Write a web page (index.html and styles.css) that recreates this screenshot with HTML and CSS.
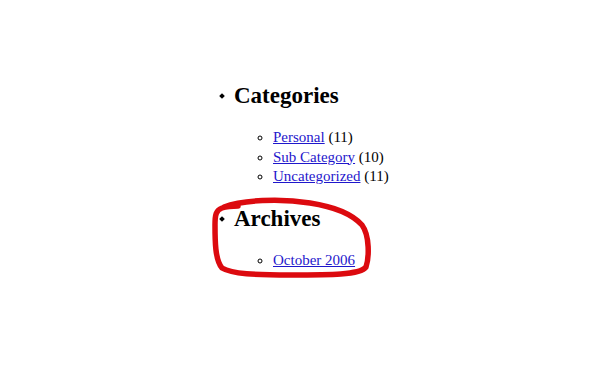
FILE: index.html
```html
<!DOCTYPE html>
<html>
<head>
<meta charset="utf-8">
<link rel="stylesheet" href="styles.css">
</head>
<body>
<div class="page">
  <ul class="sidebar">
    <li class="widget">
      <h2 class="widget-title">Categories</h2>
      <ul class="items">
        <li><a href="#">Personal</a> (11)</li>
        <li><a href="#">Sub Category</a> (10)</li>
        <li><a href="#">Uncategorized</a> (11)</li>
      </ul>
    </li>
    <li class="widget">
      <h2 class="widget-title">Archives</h2>
      <ul class="items">
        <li><a href="#">October 2006</a></li>
      </ul>
    </li>
  </ul>
  <svg class="scribble" width="605" height="375" viewBox="0 0 605 375" xmlns="http://www.w3.org/2000/svg">
    <path d="M 224 207 C 242 200, 280 198, 310 203 C 336 207, 352 214, 362 225 C 370 236, 369 258, 366 267 C 360 275, 330 275, 290 275 C 255 275, 232 274, 222 268 C 215 260, 215 240, 215 225 C 215 215, 216 210, 222 208 C 228 206, 234 206, 238 206"
      fill="none" stroke="#dc0a0f" stroke-width="5.5" stroke-linecap="round" stroke-linejoin="round"/>
  </svg>
</div>
</body>
</html>
```

FILE: styles.css
```css
html, body {
  margin: 0;
  padding: 0;
  background: #ffffff;
}

body {
  font-family: "Liberation Serif", "Times New Roman", serif;
  font-size: 15px;
  color: #000000;
}

.page {
  position: relative;
  width: 605px;
  height: 375px;
  overflow: hidden;
  padding-top: 83px;
  box-sizing: border-box;
}

.sidebar {
  margin: 0 0 0 194px;
  padding: 0 0 0 40px;
  list-style: none;
}

.widget-title {
  font-size: 23px;
  font-weight: bold;
  line-height: 26px;
  margin: 0 0 19px 0;
}

.widget-title::before {
  content: "";
  display: inline-block;
  width: 4px;
  height: 4px;
  background: #000000;
  transform: rotate(45deg);
  margin-left: -14px;
  margin-right: 10px;
  vertical-align: 5px;
}

.items {
  margin: 0 0 19.5px 0;
  padding: 0 0 0 39px;
  list-style: circle;
}

.items li {
  line-height: 19.5px;
}

.items a {
  color: #1f17cc;
  text-decoration: underline;
}

.scribble {
  position: absolute;
  left: 0;
  top: 0;
  pointer-events: none;
}
```
